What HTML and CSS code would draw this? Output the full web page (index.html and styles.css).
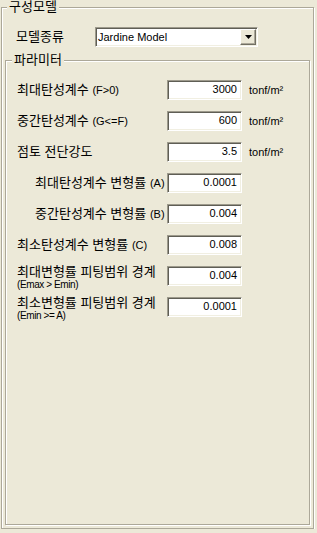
FILE: index.html
```html
<!DOCTYPE html>
<html lang="ko">
<head>
  <meta charset="UTF-8" />
  <title>구성모델</title>
  <link rel="stylesheet" href="styles.css">
</head>
<body>
  <div class="group outer">
    <div class="legend">구성모델</div>

    <div class="model-row">
      <span class="model-label">모델종류</span>
      <div class="combo">
        <span class="combo-text">Jardine Model</span>
        <span class="combo-btn">
          <svg width="7" height="4" viewBox="0 0 7 4"><path d="M0 0h7L3.5 4z" fill="#000"/></svg>
        </span>
      </div>
    </div>

    <div class="group inner">
      <div class="legend">파라미터</div>

      <div class="params">
        <div class="row">
          <span class="label">최대탄성계수 <span class="en">(F&gt;0)</span></span>
          <span class="field">3000</span>
          <span class="unit">tonf/m²</span>
        </div>
        <div class="row">
          <span class="label">중간탄성계수 <span class="en">(G&lt;=F)</span></span>
          <span class="field">600</span>
          <span class="unit">tonf/m²</span>
        </div>
        <div class="row">
          <span class="label">점토 전단강도</span>
          <span class="field">3.5</span>
          <span class="unit">tonf/m²</span>
        </div>
        <div class="row">
          <span class="label indent">최대탄성계수 변형률 <span class="en">(A)</span></span>
          <span class="field">0.0001</span>
        </div>
        <div class="row">
          <span class="label indent">중간탄성계수 변형률 <span class="en">(B)</span></span>
          <span class="field">0.004</span>
        </div>
        <div class="row">
          <span class="label">최소탄성계수 변형률 <span class="en">(C)</span></span>
          <span class="field">0.008</span>
        </div>
        <div class="row">
          <span class="label two">최대변형률 피팅범위 경계<span class="sub">(Emax &gt; Emin)</span></span>
          <span class="field">0.004</span>
        </div>
        <div class="row">
          <span class="label two">최소변형률 피팅범위 경계<span class="sub">(Emin &gt;= A)</span></span>
          <span class="field">0.0001</span>
        </div>
      </div>
    </div>
  </div>
</body>
</html>
```

FILE: styles.css
```css
* {
  box-sizing: border-box;
}
body {
  margin: 0;
  background: #ece9d8;
  color: #000;
  font-family: "Liberation Sans", "Noto Sans CJK KR", sans-serif;
  font-size: 13px;
  line-height: 14px;
}

/* etched group box */
.group {
  border: 1px solid #aca899;
  box-shadow: inset 1px 1px #fff, 1px 1px #fff;
}
.outer {
  margin: 7px 3px 0 1px;
  height: 522px;
  display: flex;
  flex-direction: column;
}
.inner {
  flex: 1;
  margin: 13px 3px 3px 3px;
}
.legend {
  width: fit-content;
  margin: -8px 0 0 5px;
  padding: 0 2px;
  line-height: 14px;
  background: #ece9d8;
}
.inner .legend {
  margin-left: 6px;
}

/* model combo */
.model-row {
  display: flex;
  align-items: center;
  margin-top: 13px;
  padding-left: 14px;
}
.model-label {
  width: 79px;
}
.combo {
  width: 163px;
  height: 20px;
  display: flex;
  align-items: center;
  background: #fff;
  border: 1px solid;
  border-color: #9d9a8c #fff #fff #9d9a8c;
  box-shadow: inset 1px 1px #5f5e55, inset -1px -1px #f1efe2;
}
.combo-text {
  flex: 1;
  padding-left: 2px;
  font-size: 11px;
}
.combo-btn {
  width: 16px;
  height: 16px;
  margin-right: 1px;
  display: flex;
  align-items: center;
  justify-content: center;
  background: #ece9d8;
  border: 1px solid;
  border-color: #fff #716f64 #716f64 #fff;
  box-shadow: inset -1px -1px #aca899;
}

/* parameter rows */
.params {
  display: grid;
  row-gap: 11px;
  margin-top: 13px;
  padding-left: 11px;
}
.row {
  display: flex;
  align-items: center;
  height: 20px;
}
.label {
  width: 150px;
  white-space: nowrap;
}
.label.indent {
  padding-left: 18px;
}
.label.two {
  align-self: flex-start;
  margin-top: -1px;
  line-height: 13px;
}
.en {
  font-size: 11px;
}
.sub {
  display: block;
  font-size: 10px;
  letter-spacing: -0.4px;
}
.field {
  width: 75px;
  height: 20px;
  padding-right: 4px;
  text-align: right;
  font-size: 11px;
  line-height: 16px;
  background: #fff;
  border: 1px solid;
  border-color: #9d9a8c #fff #fff #9d9a8c;
  box-shadow: inset 1px 1px #5f5e55, inset -1px -1px #f1efe2;
}
.unit {
  margin-left: 7px;
  font-size: 11px;
}
```
